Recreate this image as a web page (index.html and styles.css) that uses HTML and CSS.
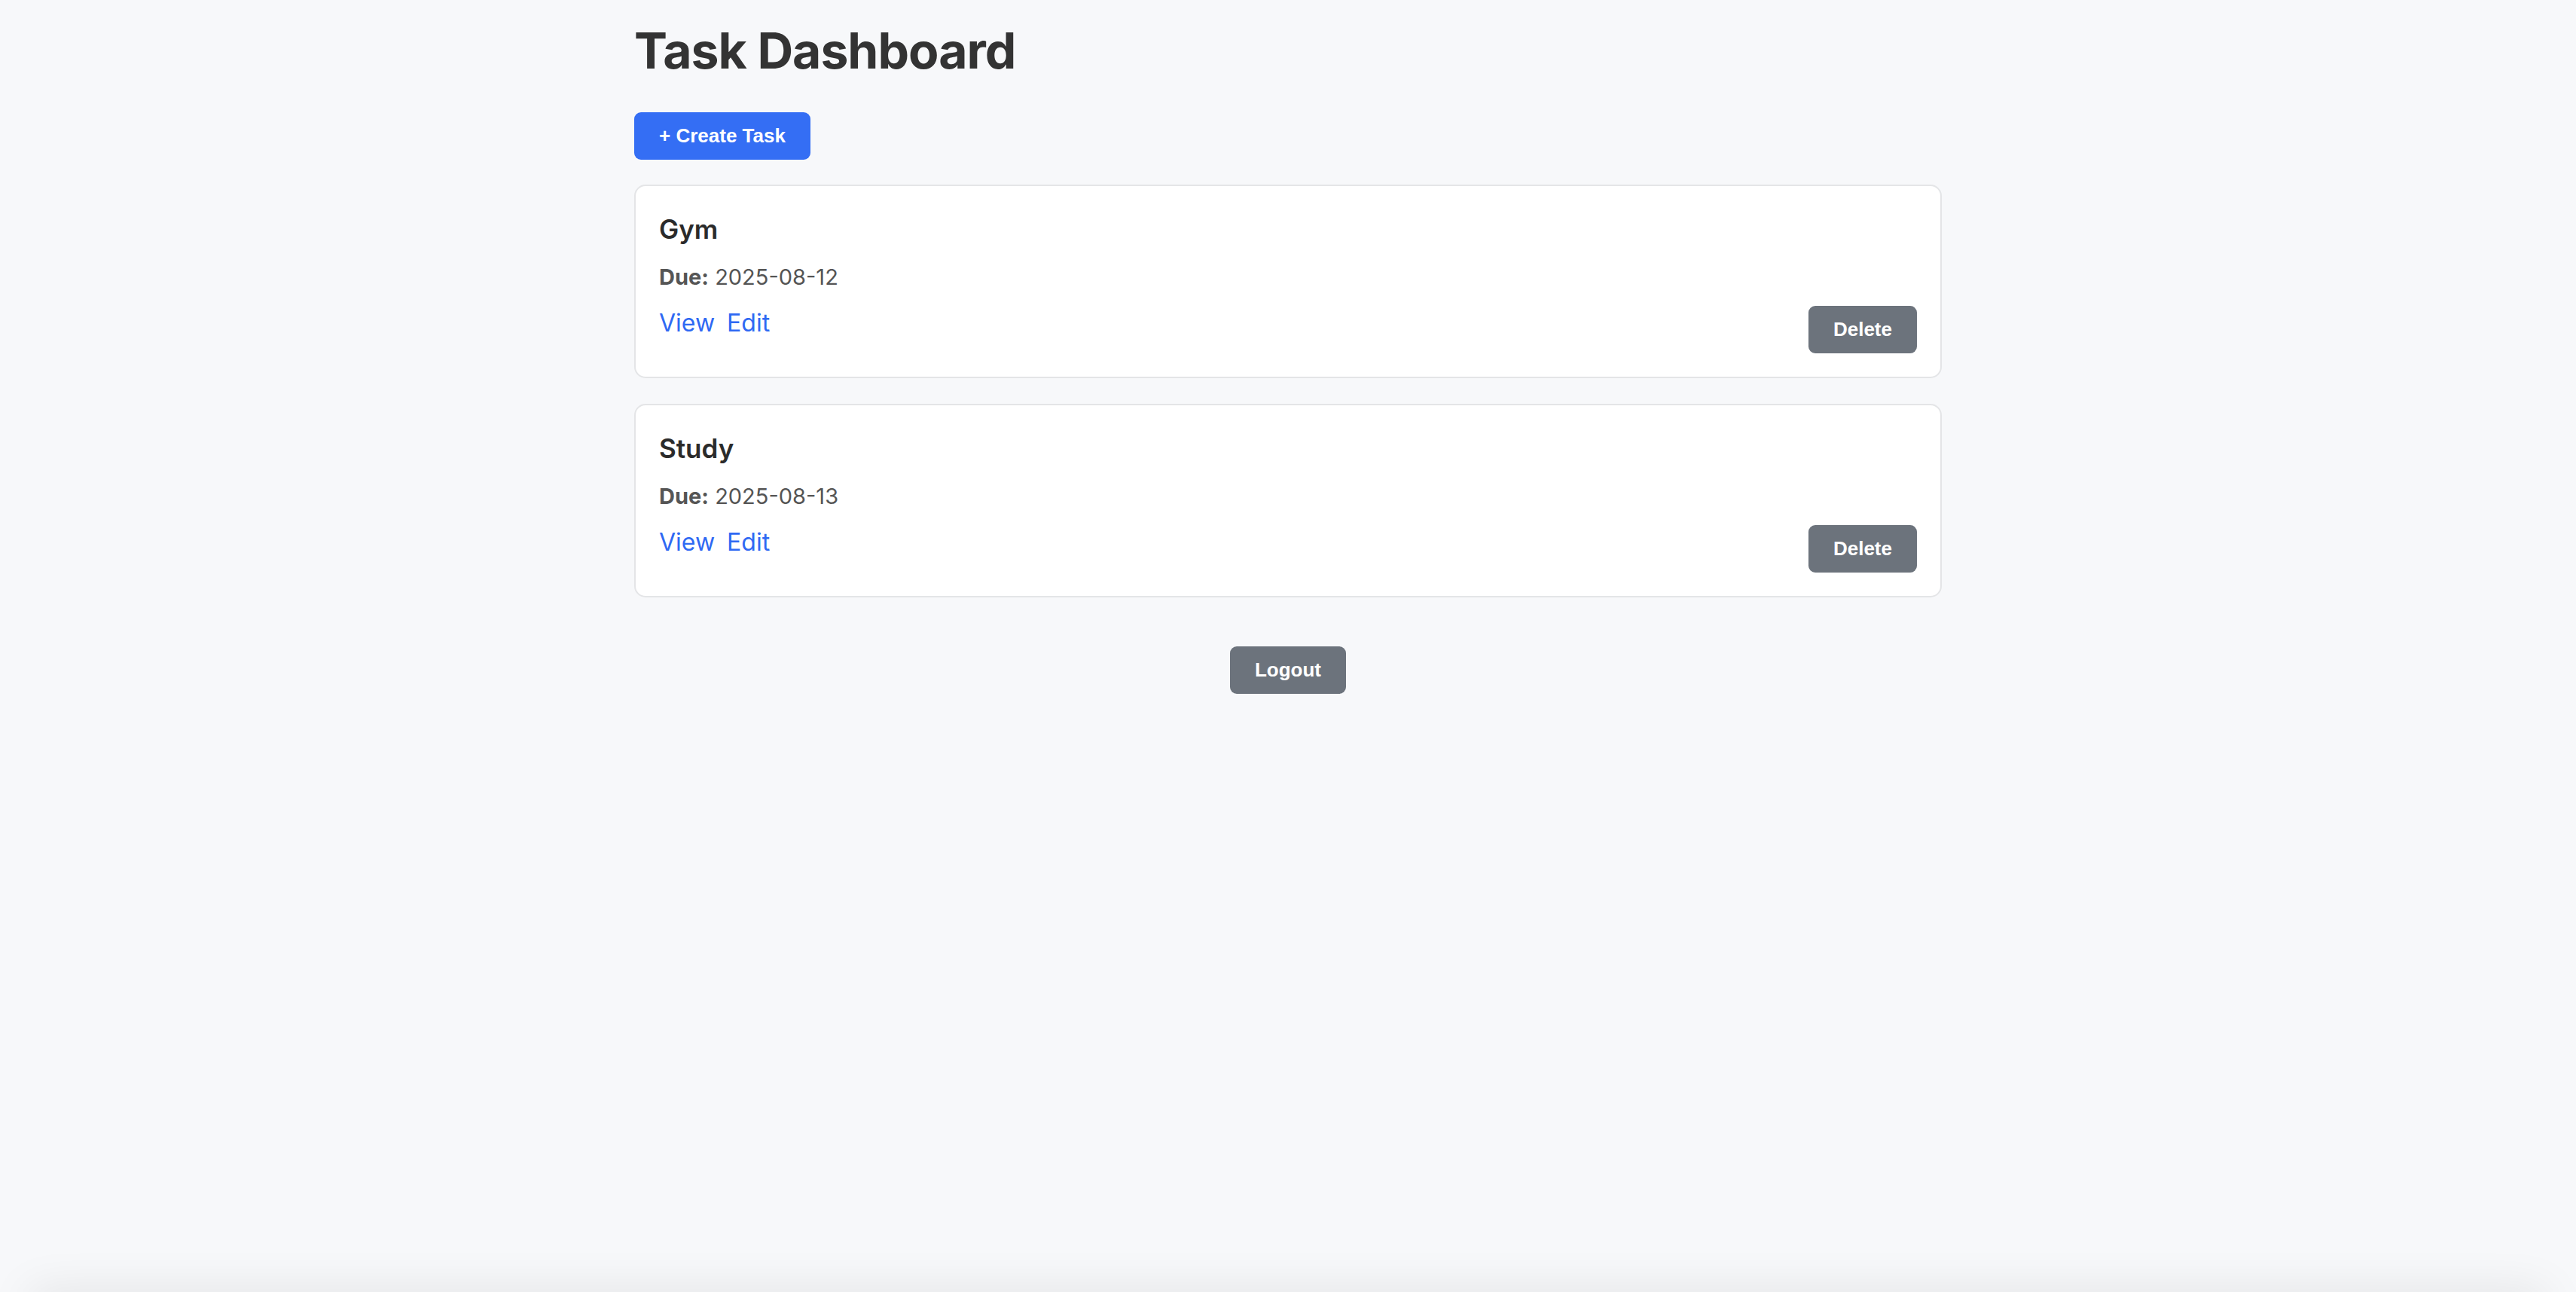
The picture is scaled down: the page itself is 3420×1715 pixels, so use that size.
FILE: index.html
```html
<!DOCTYPE html>
<html lang="en">
<head>
<meta charset="utf-8">
<title>Task Dashboard</title>
<link rel="stylesheet" href="styles.css">
</head>
<body>
<main class="page">
  <h1 class="page-title">Task Dashboard</h1>
  <button class="btn btn-primary">+ Create Task</button>
  <section class="task-list">
    <article class="task-card">
      <div class="task-info">
        <h3 class="task-title">Gym</h3>
        <p class="task-due"><strong>Due:</strong> 2025-08-12</p>
        <div class="task-links"><a href="#">View</a><a href="#">Edit</a></div>
      </div>
      <button class="btn btn-secondary">Delete</button>
    </article>
    <article class="task-card">
      <div class="task-info">
        <h3 class="task-title">Study</h3>
        <p class="task-due"><strong>Due:</strong> 2025-08-13</p>
        <div class="task-links"><a href="#">View</a><a href="#">Edit</a></div>
      </div>
      <button class="btn btn-secondary">Delete</button>
    </article>
  </section>
  <div class="logout-row">
    <button class="btn btn-secondary">Logout</button>
  </div>
</main>
<div class="bottom-bar"></div>
</body>
</html>
```

FILE: styles.css
```css
html, body {
  margin: 0;
  padding: 0;
  background: #f7f8fa;
  height: 100%;
  overflow: hidden;
}

body {
  font-family: Inter, "Noto Sans", sans-serif;
  color: #333333;
}

.page {
  width: 1736px;
  margin: 0 auto;
  padding-top: 26px;
}

.page-title {
  margin: 0 0 41px 0;
  font-size: 66px;
  line-height: 82px;
  font-weight: 700;
  letter-spacing: -1px;
  color: #333333;
}

.btn {
  font-family: "Liberation Sans", Arial, sans-serif;
  font-weight: 700;
  font-size: 26px;
  color: #ffffff;
  border: none;
  border-radius: 9px;
  height: 63px;
  padding: 0 33px;
  cursor: pointer;
  display: block;
}

.btn-primary {
  background: #346ef4;
}

.btn-secondary {
  background: #6c737c;
}

.task-list {
  margin-top: 33px;
  display: flex;
  flex-direction: column;
  gap: 34px;
}

.task-card {
  background: #ffffff;
  border: 2px solid #e4e5e7;
  border-radius: 15px;
  padding: 36px 31px 31px 31px;
  display: flex;
  justify-content: space-between;
  align-items: flex-end;
}

.task-info {
  display: flex;
  flex-direction: column;
}

.task-title {
  margin: 0;
  font-size: 35px;
  line-height: 42px;
  font-weight: 600;
  color: #2b2b2b;
}

.task-due {
  margin: 25px 0 0 0;
  font-size: 29px;
  line-height: 36px;
  color: #555555;
}

.task-due strong {
  font-weight: 700;
}

.task-links {
  margin: 23px 0 20px 0;
  display: flex;
  gap: 16px;
  font-size: 32px;
  line-height: 40px;
}

.task-links a {
  color: #2f69f3;
  text-decoration: none;
}

.logout-row {
  margin-top: 65px;
  display: flex;
  justify-content: center;
}

.bottom-bar {
  position: fixed;
  left: 40px;
  right: 40px;
  top: 100%;
  height: 40px;
  box-shadow: 0 0 60px rgba(0, 0, 0, 0.1);
  background: #f7f8fa;
}
```
